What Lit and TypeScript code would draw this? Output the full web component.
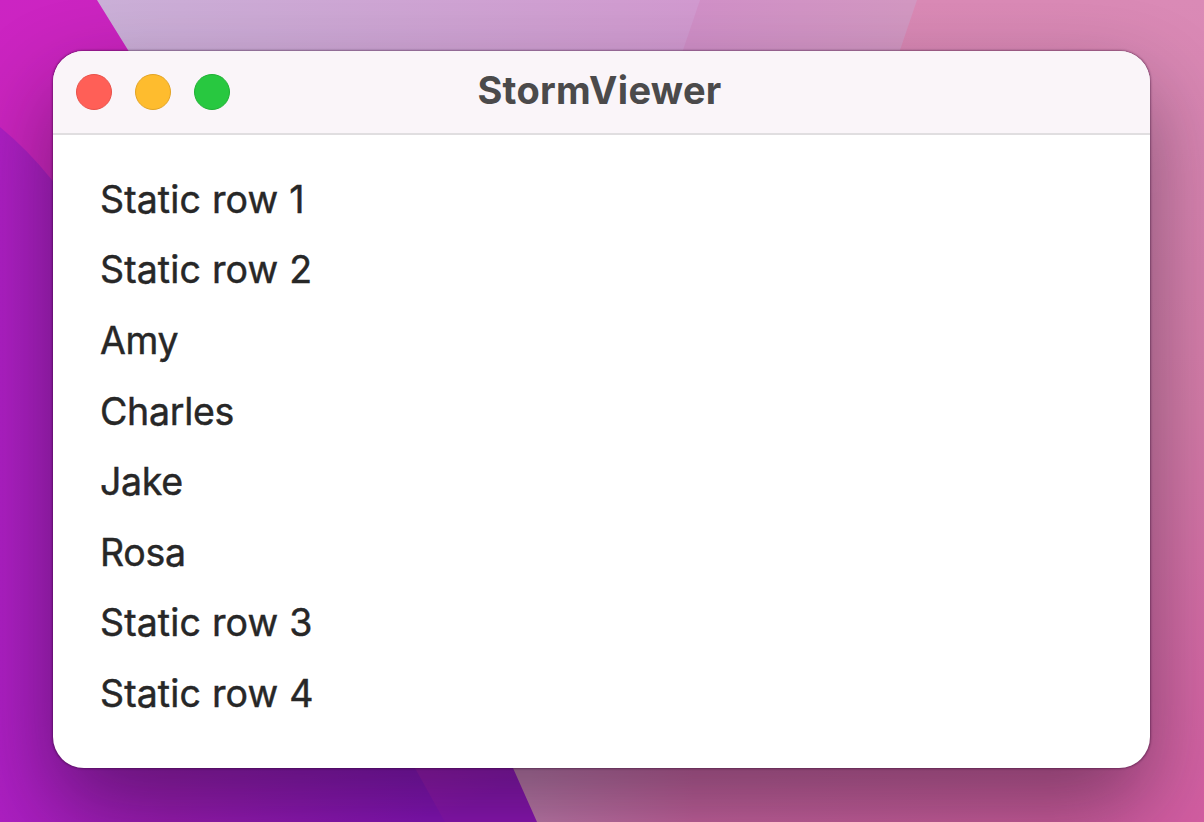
import { LitElement, html, css } from "lit";
import { customElement, property } from "lit/decorators.js";
import { classMap } from "lit/directives/class-map.js";

@customElement("desktop-wallpaper")
class DesktopWallpaper extends LitElement {
  static styles = css`
    :host { display: block; }
    .art { display: block; width: 100%; height: 100%; }
  `;

  render() {
    return html`
      <svg class="art" viewBox="0 0 1204 822" preserveAspectRatio="none" aria-hidden="true">
        <defs>
          <linearGradient id="sky" gradientUnits="userSpaceOnUse" x1="100" y1="0" x2="700" y2="0">
            <stop offset="0" stop-color="#cbb0d8" />
            <stop offset="1" stop-color="#d29ad0" />
          </linearGradient>
          <linearGradient id="mid" gradientUnits="userSpaceOnUse" x1="690" y1="0" x2="910" y2="0">
            <stop offset="0" stop-color="#d190c8" />
            <stop offset="1" stop-color="#d398c2" />
          </linearGradient>
          <linearGradient id="rose" x1="0" y1="0" x2="0" y2="1">
            <stop offset="0" stop-color="#da8ab6" />
            <stop offset="0.5" stop-color="#d47ca8" />
            <stop offset="1" stop-color="#d35da2" />
          </linearGradient>
          <linearGradient id="floor" gradientUnits="userSpaceOnUse" x1="530" y1="0" x2="1140" y2="0">
            <stop offset="0" stop-color="#c17bab" />
            <stop offset="0.27" stop-color="#c6629d" />
            <stop offset="0.85" stop-color="#cd5c9c" />
            <stop offset="1" stop-color="#d35da2" />
          </linearGradient>
          <linearGradient id="magenta" gradientUnits="userSpaceOnUse" x1="0" y1="0" x2="440" y2="822">
            <stop offset="0" stop-color="#cc24c3" />
            <stop offset="0.25" stop-color="#c824b8" />
            <stop offset="0.88" stop-color="#a81bb4" />
            <stop offset="1" stop-color="#8c14b4" />
          </linearGradient>
          <linearGradient id="violet" gradientUnits="userSpaceOnUse" x1="0" y1="0" x2="430" y2="0">
            <stop offset="0" stop-color="#ad1fc2" />
            <stop offset="0.4" stop-color="#9c1ab4" />
            <stop offset="1" stop-color="#8612b8" />
          </linearGradient>
        </defs>
        <rect width="1204" height="822" fill="url(#sky)" />
        <path d="M700 0L683 50L640 200H1204V0Z" fill="url(#mid)" />
        <path d="M917 0L900 50L760 500V822H1204V0Z" fill="url(#rose)" />
        <rect y="740" width="1140" height="82" fill="url(#floor)" />
        <path d="M0 0H97L128 50Q390 470 513 768L537 822H0Z" fill="url(#magenta)" />
        <path d="M0 127Q28 150 52 180Q260 440 415 768L445 822H0Z" fill="url(#violet)" />
      </svg>
    `;
  }
}

@customElement("title-bar")
class TitleBar extends LitElement {
  @property() label = "";

  static styles = css`
    :host {
      display: grid;
      grid-template-columns: 1fr auto 1fr;
      align-items: center;
      box-sizing: border-box;
      height: 84px;
      padding: 0 23px;
      background: #faf5f9;
      border-bottom: 2px solid #e0dee0;
    }
    .lights { display: flex; gap: 23px; }
    .light {
      box-sizing: border-box;
      width: 36px;
      height: 36px;
      border-radius: 50%;
      border: 1px solid;
    }
    .close { background: #ff5f57; border-color: #e8514a; }
    .minimize { background: #febc2e; border-color: #e2a325; }
    .zoom { background: #28c840; border-color: #20b035; }
    .title {
      margin: 0 4px 4px 0;
      font: 700 38px/46px Inter, sans-serif;
      letter-spacing: 0.3px;
      color: #4b4a4b;
    }
  `;

  render() {
    return html`
      <div class="lights">
        <span class="light close"></span>
        <span class="light minimize"></span>
        <span class="light zoom"></span>
      </div>
      <div class="title">${this.label}</div>
    `;
  }
}

@customElement("app-root")
class AppRoot extends LitElement {
  @property({ attribute: false }) rows = [
    "Static row 1", "Static row 2", "Amy", "Charles",
    "Jake", "Rosa", "Static row 3", "Static row 4",
  ];

  static styles = css`
    :host {
      display: grid;
      width: 100%;
      height: 100vh;
      overflow: hidden;
    }
    .wallpaper, .desktop { grid-area: 1 / 1; min-height: 0; }
    .desktop {
      display: flex;
      box-sizing: border-box;
      padding: 51px 54px 54px 53px;
    }
    .window {
      flex: 1;
      display: flex;
      flex-direction: column;
      overflow: hidden;
      border-radius: 31px;
      background: #fff;
      box-shadow: 0 0 2px 0.5px rgba(40, 0, 40, 0.4), 0 38px 86px rgba(20, 15, 30, 0.42);
    }
    .list {
      margin: 0;
      padding: 29.8px 47px;
      list-style: none;
      font: 400 37.5px/70.6px Inter, sans-serif;
      letter-spacing: -0.3px;
      color: #272727;
      -webkit-text-stroke: 0.45px #272727;
    }
    .static {
      letter-spacing: 0.1px;
      word-spacing: 0.3px;
    }
  `;

  render() {
    return html`
      <desktop-wallpaper class="wallpaper"></desktop-wallpaper>
      <main class="desktop">
        <section class="window">
          <title-bar label="StormViewer"></title-bar>
          <ul class="list">
            ${this.rows.map((row) => html`
              <li class=${classMap({ static: row.startsWith("Static") })}>${row}</li>
            `)}
          </ul>
        </section>
      </main>
    `;
  }
}
